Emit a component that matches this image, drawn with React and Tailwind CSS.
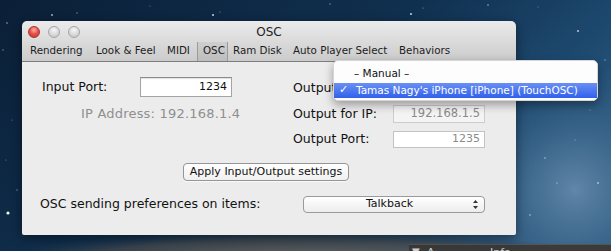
import React from 'react';

// desktop wallpaper stars (x, y, r, opacity)
const stars = [
  [52, 15, 0.9, 0.7], [77, 13, 0.7, 0.5], [213, 15, 1, 0.8], [220, 12, 0.6, 0.5], [7, 23, 0.8, 0.6],
  [3, 50, 0.7, 0.5], [411, 14, 1, 0.8], [423, 8, 0.6, 0.5], [488, 5, 0.8, 0.6], [578, 31, 1, 0.7],
  [538, 7, 0.6, 0.4], [545, 158, 0.8, 0.6], [598, 183, 0.9, 0.6], [557, 183, 0.7, 0.5], [8, 213, 1.6, 0.95],
  [17, 190, 0.7, 0.5], [12, 120, 0.6, 0.4], [560, 70, 0.7, 0.5], [590, 110, 0.6, 0.5], [530, 215, 0.8, 0.6],
  [575, 140, 0.6, 0.5], [150, 6, 0.6, 0.4], [330, 4, 0.7, 0.5], [605, 60, 0.7, 0.5], [6, 160, 0.6, 0.4],
];

function Wallpaper() {
  return (
    <svg className="absolute inset-0" width="611" height="251" viewBox="0 0 611 251">
      <defs>
        <linearGradient id="sky" x1="0" y1="0" x2="1" y2="0.5">
          <stop offset="0" stopColor="#0b1f37" />
          <stop offset="0.55" stopColor="#10304f" />
          <stop offset="0.85" stopColor="#1e4a70" />
          <stop offset="1" stopColor="#2b587e" />
        </linearGradient>
        <radialGradient id="glow" cx="575" cy="190" r="130" gradientUnits="userSpaceOnUse">
          <stop offset="0" stopColor="#6a8fb0" stopOpacity="0.85" />
          <stop offset="1" stopColor="#2b587e" stopOpacity="0" />
        </radialGradient>
        <radialGradient id="dust" cx="0.5" cy="0.5" r="0.5">
          <stop offset="0" stopColor="#6b655e" />
          <stop offset="0.7" stopColor="#4a4a4a" stopOpacity="0.7" />
          <stop offset="1" stopColor="#2a3a4a" stopOpacity="0" />
        </radialGradient>
      </defs>
      <rect width="611" height="251" fill="url(#sky)" />
      <rect width="611" height="251" fill="url(#glow)" />
      <ellipse cx="300" cy="260" rx="300" ry="30" fill="url(#dust)" />
      {stars.map(([x, y, r, o], i) => (
        <circle key={i} cx={x} cy={y} r={r} fill="#ffffff" opacity={o} />
      ))}
    </svg>
  );
}

function Light({ red }) {
  return red ? (
    <div className="w-[12px] h-[12px] rounded-full border border-[#a9362f] bg-[radial-gradient(circle_at_50%_30%,#ffb1a8_0%,#e8534b_45%,#bf322b_100%)]" />
  ) : (
    <div className="w-[12px] h-[12px] rounded-full border border-[#a6a6a6] bg-[radial-gradient(circle_at_50%_30%,#f6f6f6_0%,#d9d9d9_55%,#bfbfbf_100%)]" />
  );
}

function App() {
  return (
    <div className="relative w-[611px] h-[251px] overflow-hidden pl-[22px] pt-[21px] font-['DejaVu_Sans',sans-serif]">
      <Wallpaper />

      {/* other window peeking at the bottom */}
      <div className="absolute left-[409px] top-[244px] w-[202px] h-[10px] bg-[#3a3a3a] border-t border-[#555]">
        <span className="absolute left-[3px] top-[2px] text-[10px] leading-none text-[#cfcfcf]">▼</span>
        <span className="absolute left-[18px] top-[2px] text-[11px] leading-none text-[#cfcfcf]">A</span>
        <span className="absolute left-[81px] top-[2px] text-[11px] leading-none text-[#cfcfcf]">Info</span>
      </div>

      {/* OSC window */}
      <div className="relative z-10 w-[494px] shadow-[0_3px_12px_rgba(0,0,0,0.45)] rounded-t-[5px]">
        <div className="h-[41px] rounded-t-[5px] bg-gradient-to-b from-[#ebebeb] to-[#cbcbcb] border-b border-[#7d7d7d]">
          <div className="relative flex items-center h-[21px] pl-[6px] gap-[8px]">
            <Light red />
            <Light />
            <Light />
            <div className="absolute inset-0 flex items-center justify-center text-[12px] text-[#222]">OSC</div>
          </div>
          <div className="flex items-stretch h-[19px] pl-[8px] text-[10.3px] text-[#1c1c1c]">
            <span className="w-[66px] flex items-center pb-[1px]">Rendering</span>
            <span className="w-[71px] flex items-center pb-[1px]">Look &amp; Feel</span>
            <span className="w-[30px] flex items-center pb-[1px]">MIDI</span>
            <span className="w-[31px] flex items-center pb-[1px] pl-[5px] border-x border-[#9a9a9a] bg-gradient-to-b from-[#cfcfcf] to-[#bdbdbd]">OSC</span>
            <span className="w-[65px] flex items-center pb-[1px] pl-[5px]">Ram Disk</span>
            <span className="w-[106px] flex items-center pb-[1px]">Auto Player Select</span>
            <span className="flex items-center pb-[1px]">Behaviors</span>
          </div>
        </div>

        <div className="flex flex-col h-[173px] pt-[15px] bg-[#ececec] rounded-b-[2px] text-[12.5px] text-[#111]">
          <div className="flex items-center h-[20px]">
            <div className="w-[271px] flex items-center pl-[20px]">
              <span className="w-[98px]">Input Port:</span>
              <div className="w-[92px] h-[20px] flex items-center justify-end pr-[4px] text-[11px] bg-white border border-[#a4a4a4] border-t-[#8a8a8a] shadow-[inset_0_1px_1px_rgba(0,0,0,0.12)]">1234</div>
            </div>
            <span className="pt-[3px]">Output to:</span>
          </div>

          <div className="flex items-center h-[18px] mt-[8px]">
            <div className="w-[271px] pl-[59px] text-[13px] tracking-[0.2px] text-[#8f8f8f]">IP Address: 192.168.1.4</div>
            <span className="w-[100px]">Output for IP:</span>
            <div className="w-[92px] h-[18px] flex items-center justify-end pr-[4px] text-[11.5px] bg-[#f4f4f4] border border-[#cdcdcd] text-[#8a8a8a]">192.168.1.5</div>
          </div>

          <div className="flex items-center h-[17px] mt-[8px] pl-[271px]">
            <span className="w-[100px]">Output Port:</span>
            <div className="w-[92px] h-[17px] flex items-center justify-end pr-[4px] text-[11px] bg-white border border-[#c2c2c2] text-[#8a8a8a]">1235</div>
          </div>

          <div className="flex mt-[15px] pl-[161px]">
            <button className="w-[166px] h-[18px] flex items-center justify-center rounded-[4px] border border-[#959595] bg-gradient-to-b from-white to-[#f0f0f0] text-[11px] text-[#111] shadow-[0_1px_0_rgba(255,255,255,0.7)]">
              Apply Input/Output settings
            </button>
          </div>

          <div className="flex items-center h-[17px] mt-[15px]">
            <span className="w-[281px] pl-[18px]">OSC sending preferences on items:</span>
            <div className="relative w-[182px] h-[17px] flex items-center justify-center pr-[9px] rounded-[4px] border border-[#9a9a9a] bg-gradient-to-b from-white to-[#ededed] text-[11px] text-[#111]">
              Talkback
              <svg className="absolute right-[6px] top-[3px]" width="5" height="9" viewBox="0 0 5 9">
                <path d="M2.5 0 L5 3 H0 Z" fill="#333" />
                <path d="M0 6 H5 L2.5 9 Z" fill="#333" />
              </svg>
            </div>
          </div>
        </div>

        {/* open popup menu */}
        <div className="absolute left-[311px] top-[39px] w-[265px] pt-[3px] pb-[2px] rounded-[5px] bg-[#fdfdfd] border border-[#d6d6d6] shadow-[0_4px_10px_rgba(0,0,0,0.35)] text-[10.5px] text-[#111]">
          <div className="h-[19px] flex items-center pl-[20px]">– Manual –</div>
          <div className="h-[15px] flex items-center bg-gradient-to-b from-[#6a8ff4] to-[#3160ea] text-white">
            <span className="w-[22px] pl-[5px] text-[11px]">✓</span>
            <span>Tamas Nagy's iPhone [iPhone] (TouchOSC)</span>
          </div>
        </div>
      </div>
    </div>
  );
}

export default App;
